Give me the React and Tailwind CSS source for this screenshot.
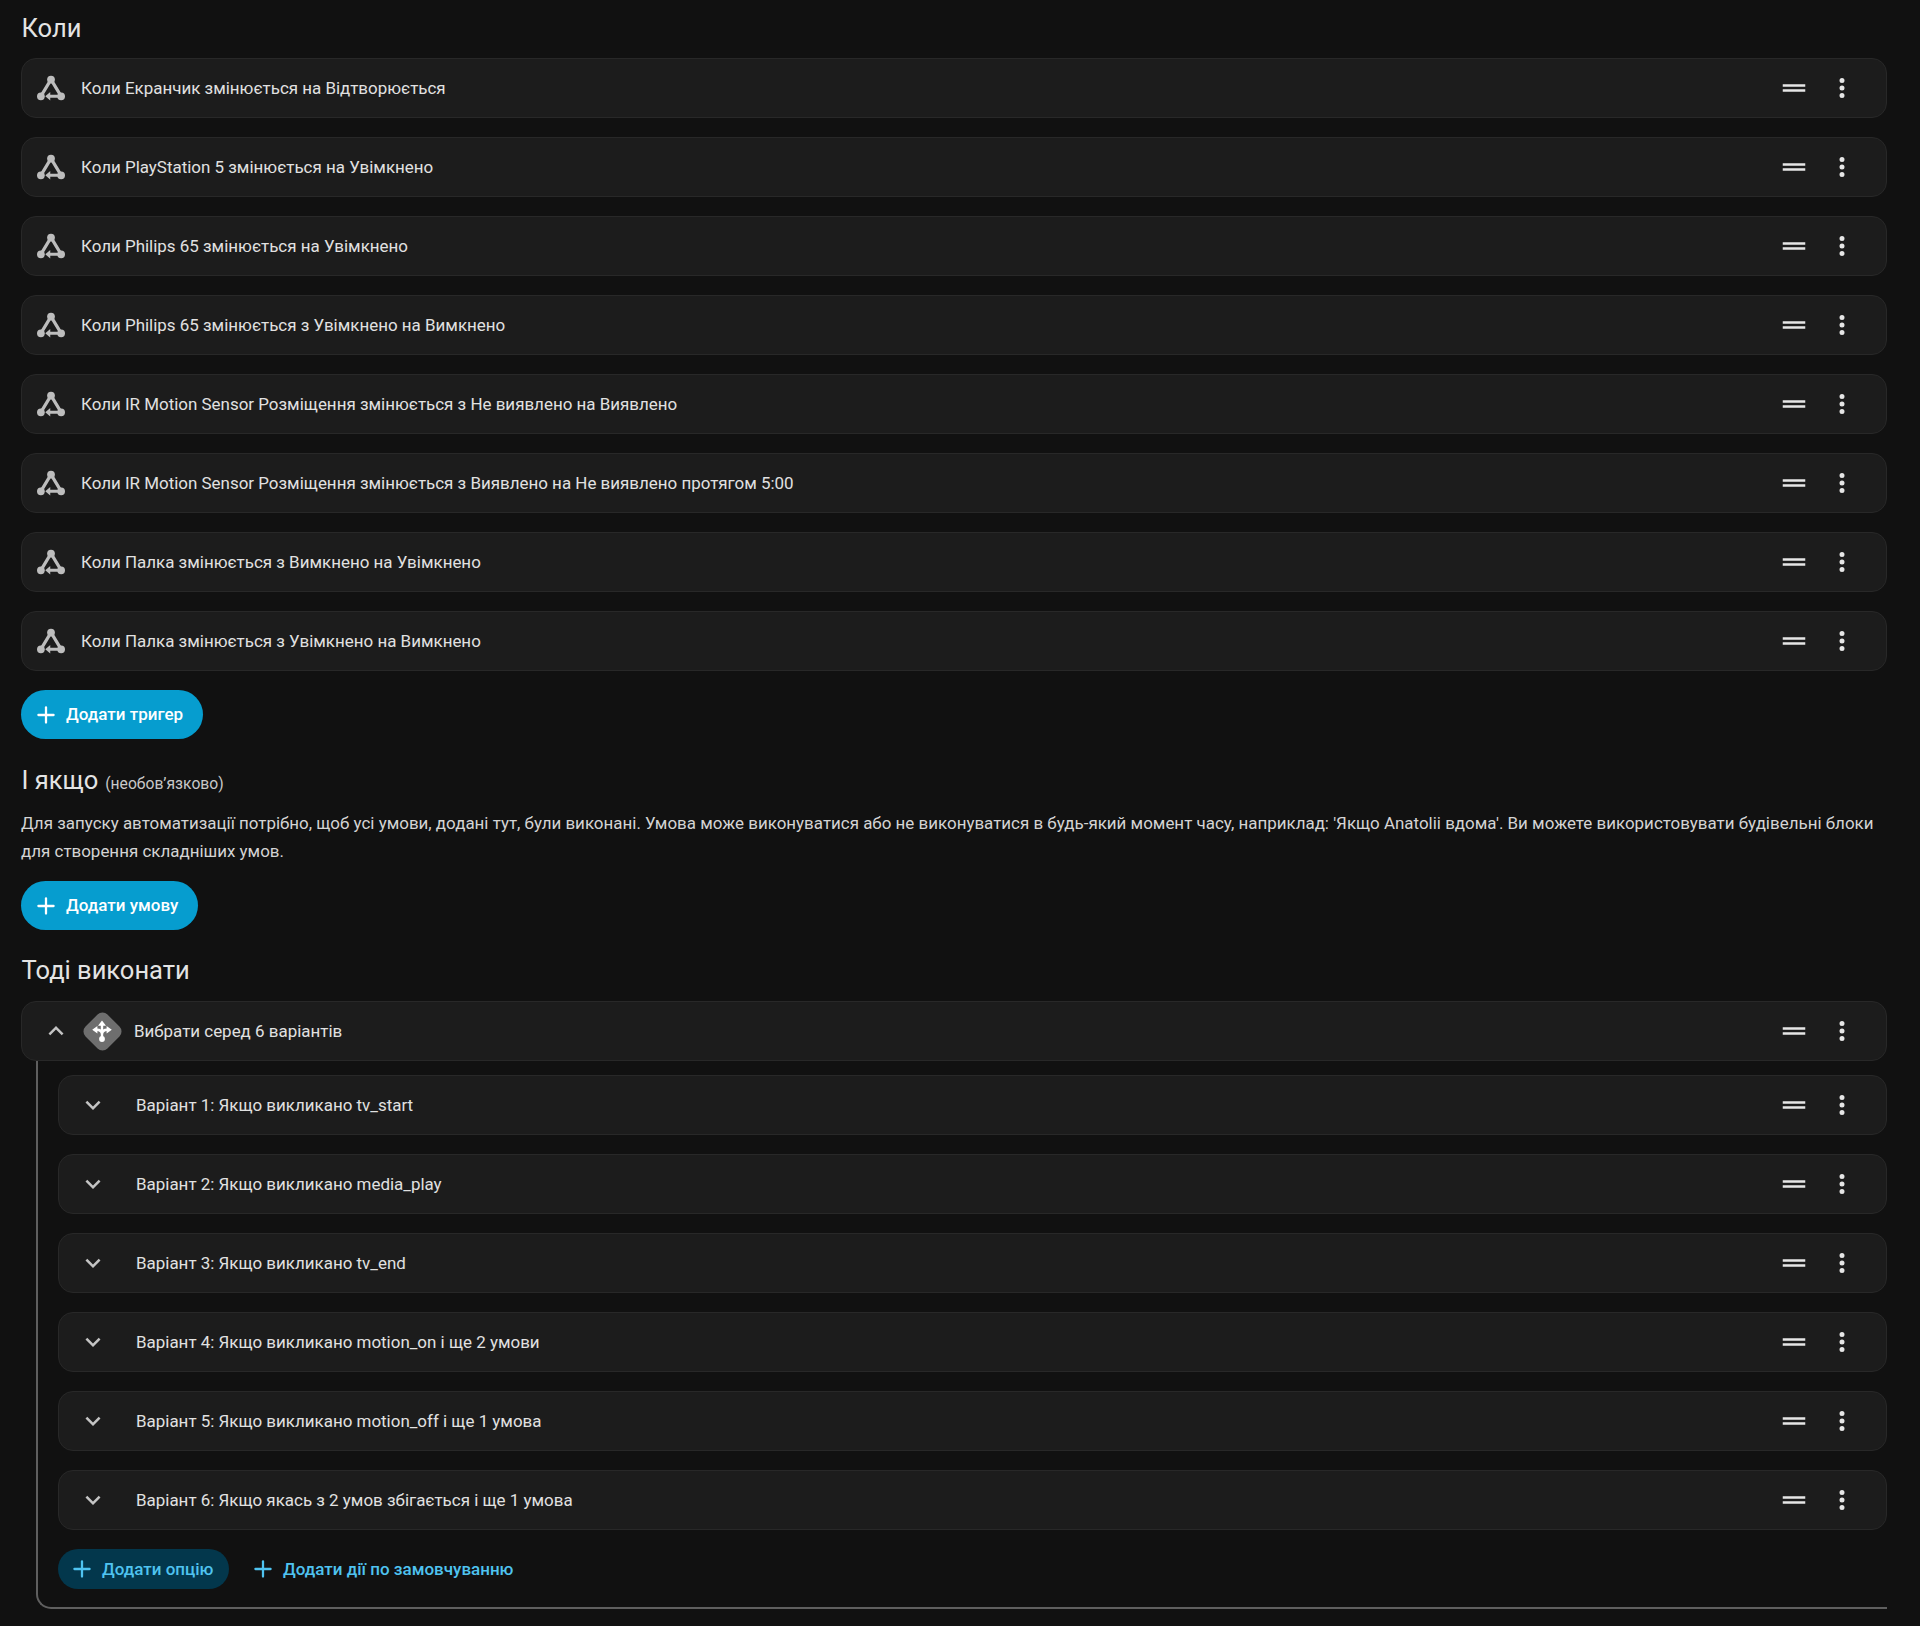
import React from 'react';
import { Plus } from 'lucide-react';

const TRIGGERS = [
  'Коли Екранчик змінюється на Відтворюється',
  'Коли PlayStation 5 змінюється на Увімкнено',
  'Коли Philips 65 змінюється на Увімкнено',
  'Коли Philips 65 змінюється з Увімкнено на Вимкнено',
  'Коли IR Motion Sensor Розміщення змінюється з Не виявлено на Виявлено',
  'Коли IR Motion Sensor Розміщення змінюється з Виявлено на Не виявлено протягом 5:00',
  'Коли Палка змінюється з Вимкнено на Увімкнено',
  'Коли Палка змінюється з Увімкнено на Вимкнено',
];

const OPTIONS = [
  'Варіант 1: Якщо викликано tv_start',
  'Варіант 2: Якщо викликано media_play',
  'Варіант 3: Якщо викликано tv_end',
  'Варіант 4: Якщо викликано motion_on і ще 2 умови',
  'Варіант 5: Якщо викликано motion_off і ще 1 умова',
  'Варіант 6: Якщо якась з 2 умов збігається і ще 1 умова',
];

function StateIcon() {
  return (
    <svg width="30" height="30" viewBox="0 0 24 24" className="shrink-0 text-[#bdbdbd]" fill="currentColor">
      <circle cx="12" cy="5.2" r="3.1" />
      <circle cx="3.9" cy="18.6" r="3.1" />
      <circle cx="20.1" cy="18.6" r="3.1" />
      <path d="M12 5.2 3.9 18.6M12 5.2 20.1 18.6" stroke="currentColor" strokeWidth="2.7" fill="none" />
      <path d="M20 17.4V19.8H11.4V22L7.4 18.6 11.4 15.2V17.4Z" />
    </svg>
  );
}

function DecisionIcon() {
  return (
    <div className="relative w-[40px] h-[40px] shrink-0 flex items-center justify-center">
      <div className="absolute w-[31px] h-[31px] rotate-45 rounded-[7px] bg-[#6e6e6e]" />
      <svg width="24" height="24" viewBox="0 0 24 24" className="relative text-white" fill="currentColor">
        <circle cx="12" cy="20" r="2.9" />
        <path d="M12 20V6M12 15.5C12 12.5 10 10.8 6.5 10.8M12 15.5C12 12.5 14 10.8 17.5 10.8" stroke="currentColor" strokeWidth="2.4" fill="none" />
        <path d="M12 1.6 16 6.8H8ZM2.2 10.8 7.4 7V14.6ZM21.8 10.8 16.6 7V14.6Z" />
      </svg>
    </div>
  );
}

function Handle() {
  return (
    <svg width="30" height="30" viewBox="0 0 24 24" className="shrink-0 text-[#e6e6e6]" fill="currentColor">
      <path d="M21 11H3V9H21V11M21 13H3V15H21V13Z" />
    </svg>
  );
}

function Dots() {
  return (
    <svg width="30" height="30" viewBox="0 0 24 24" className="shrink-0 text-[#e6e6e6]" fill="currentColor">
      <path d="M12,16A2,2 0 0,1 14,18A2,2 0 0,1 12,20A2,2 0 0,1 10,18A2,2 0 0,1 12,16M12,10A2,2 0 0,1 14,12A2,2 0 0,1 12,14A2,2 0 0,1 10,12A2,2 0 0,1 12,10M12,4A2,2 0 0,1 14,6A2,2 0 0,1 12,8A2,2 0 0,1 10,6A2,2 0 0,1 12,4Z" />
    </svg>
  );
}

function Chevron({ up }) {
  return (
    <svg width="30" height="30" viewBox="0 0 24 24" className="shrink-0 text-[#c4c4c4]" fill="currentColor">
      <path d={up ? 'M7.41,15.41L12,10.83L16.59,15.41L18,14L12,8L6,14L7.41,15.41Z' : 'M7.41,8.58L12,13.17L16.59,8.58L18,10L12,16L6,10L7.41,8.58Z'} />
    </svg>
  );
}

function Row({ children, className }) {
  return (
    <div className={`flex items-center h-[60px] rounded-[15px] bg-[#1c1c1c] border border-[#282828] pr-[29px] ${className}`}>
      {children}
      <div className="ml-auto flex items-center gap-[18px]">
        <Handle />
        <Dots />
      </div>
    </div>
  );
}

function Heading({ children }) {
  return <h2 className="text-[25.5px] leading-[34px] text-[#e4e4e4] pl-[0.5px]">{children}</h2>;
}

function AddButton({ children, className }) {
  return (
    <button className={`flex items-center h-[49px] rounded-full bg-[#069dcf] pl-[12px] text-white text-[17px] font-medium ${className}`}>
      <Plus size={26} strokeWidth={2.1} className="mr-[7px]" />
      <span className="pt-[1px]">{children}</span>
    </button>
  );
}

export default function App() {
  return (
    <div className="min-h-[1626px] bg-[#111111] pl-[21px] pr-[33px] pt-[11px] text-[#e1e1e1] text-[16.94px] font-['Roboto',sans-serif]">
      <Heading>Коли</Heading>

      <div className="mt-[13px] flex flex-col gap-[19px]">
        {TRIGGERS.map((t) => (
          <Row key={t} className="pl-[14px]">
            <StateIcon />
            <span className="ml-[15px] pt-[1px]">{t}</span>
          </Row>
        ))}
      </div>

      <AddButton className="mt-[19px] w-[182px]">Додати тригер</AddButton>

      <div className="mt-[24px] flex items-baseline gap-[7px]">
        <Heading>І якщо</Heading>
        <span className="text-[15.7px] text-[#c8c8c8]">(необов’язково)</span>
      </div>
      <p className="mt-[12px] leading-[28px] text-[#d4d4d4]">
        Для запуску автоматизації потрібно, щоб усі умови, додані тут, були виконані. Умова може виконуватися або не виконуватися в будь-який момент часу, наприклад: 'Якщо Anatolii вдома'. Ви можете використовувати будівельні блоки для створення складніших умов.
      </p>
      <AddButton className="mt-[16px] w-[177px]">Додати умову</AddButton>

      <div className="mt-[23px]">
        <Heading>Тоді виконати</Heading>
      </div>

      <Row className="mt-[14px] pl-[19px]">
        <Chevron up />
        <div className="ml-[11px]">
          <DecisionIcon />
        </div>
        <span className="ml-[12px] pt-[1px]">Вибрати серед 6 варіантів</span>
      </Row>

      <div className="ml-[15px] border-l-2 border-b-2 border-[#5f5f5f] rounded-bl-[15px] pl-[20px] pt-[14px] pb-[18px]">
        <div className="flex flex-col gap-[19px]">
          {OPTIONS.map((o) => (
            <Row key={o} className="pl-[19px]">
              <Chevron />
              <span className="ml-[28px] pt-[1px]">{o}</span>
            </Row>
          ))}
        </div>
        <div className="mt-[19px] flex items-center text-[17px] font-medium text-[#4fc3f0]">
          <button className="flex items-center h-[40px] w-[171px] rounded-full bg-[#03374c] pl-[11px]">
            <Plus size={26} strokeWidth={2.1} className="mr-[7px]" />
            <span className="pt-[1px]">Додати опцію</span>
          </button>
          <button className="ml-[10px] flex items-center h-[40px] pl-[11px]">
            <Plus size={26} strokeWidth={2.1} className="mr-[7px]" />
            <span className="pt-[1px]">Додати дії по замовчуванню</span>
          </button>
        </div>
      </div>
    </div>
  );
}
